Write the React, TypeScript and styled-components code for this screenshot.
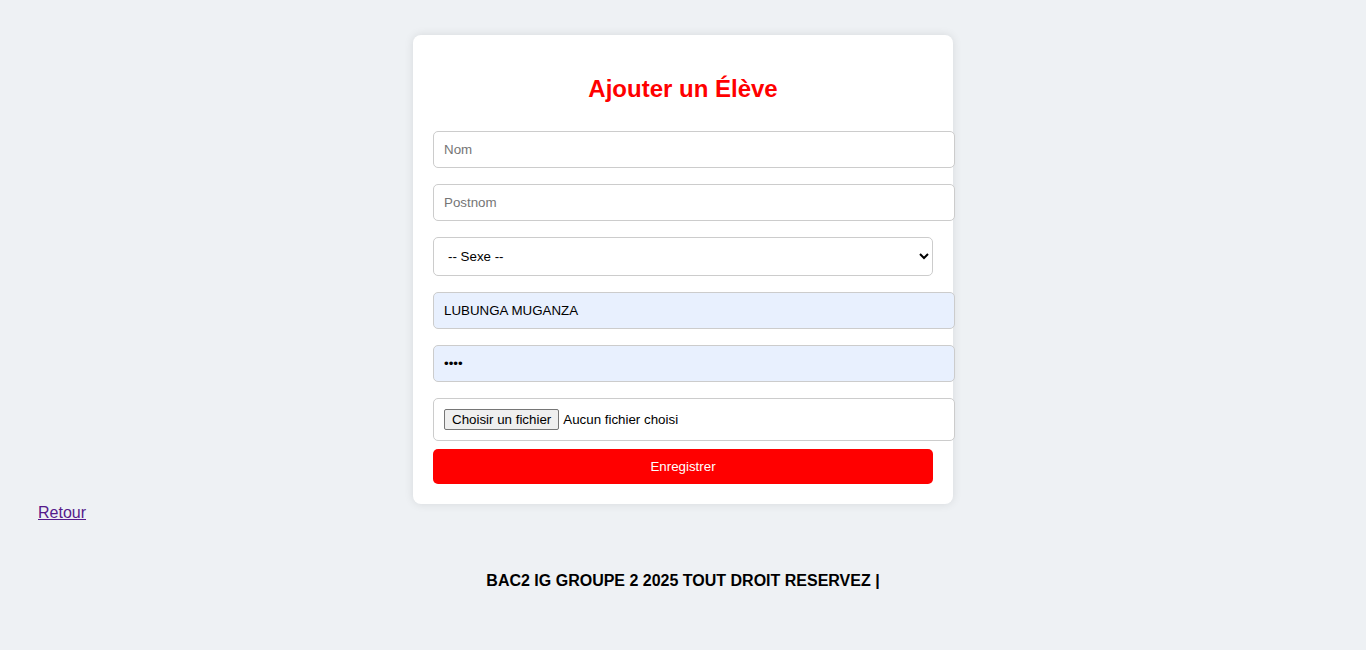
import React from 'react';
import styled, { createGlobalStyle } from 'styled-components';

const GlobalStyle = createGlobalStyle`
  body {
    margin: 0;
    background-color: #eef1f4;
    font-family: "Liberation Sans", Arial, sans-serif;
  }
`;

const Page = styled.div`
  padding-top: 35px;
`;

const Card = styled.div`
  width: 500px;
  margin: 0 auto;
  padding: 20px;
  background-color: #fff;
  border-radius: 8px;
  box-shadow: 0 0 10px rgba(0, 0, 0, 0.1);
`;

const Title = styled.h2`
  margin: 19.92px 0;
  font-size: 24px;
  text-align: center;
  color: #ff0000;
`;

const Form = styled.form`
  display: flex;
  flex-direction: column;
  align-items: flex-start;
`;

const Field = styled.input<{ $filled?: boolean }>`
  width: 100%;
  margin: 8px 0;
  padding: 10px;
  border: 1px solid #ccc;
  border-radius: 5px;
  font-family: inherit;
  font-size: 13.33px;
  color: #000;
  background-color: ${(p) => (p.$filled ? '#e8f0fe' : '#fff')};
  outline: none;

  &::placeholder {
    color: #757575;
  }
`;

const Select = styled.select`
  width: 100%;
  margin: 8px 0;
  padding: 10px;
  border: 1px solid #ccc;
  border-radius: 5px;
  font-family: inherit;
  font-size: 13.33px;
  color: #000;
  background-color: #fff;
`;

const FileBox = styled.label`
  display: flex;
  align-items: center;
  width: 100%;
  margin: 8px 0;
  padding: 10px;
  border: 1px solid #ccc;
  border-radius: 5px;
  background-color: #fff;
  font-size: 13.33px;
  color: #000;

  & input {
    display: none;
  }
`;

const FileButton = styled.span`
  display: inline-block;
  margin-right: 4px;
  padding: 1px 7px;
  height: 17px;
  line-height: 17px;
  border: 1px solid #767676;
  border-radius: 2px;
  background-color: #efefef;
`;

const SubmitButton = styled.button`
  width: 100%;
  margin: 0;
  padding: 10px;
  border: none;
  border-radius: 5px;
  background-color: #ff0000;
  color: #fff;
  font-family: inherit;
  font-size: 13.33px;
  line-height: 15px;
  cursor: pointer;
`;

const BackRow = styled.div`
  padding-left: 38px;
  font-size: 16px;

  & a {
    color: #551a8b;
  }
`;

const Footer = styled.footer`
  margin-top: 50px;
  text-align: center;
  font-weight: bold;
  font-size: 16px;
  color: #000;
`;

function App() {
  return (
    <Page>
      <GlobalStyle />
      <Card>
        <Title>Ajouter un Élève</Title>
        <Form onSubmit={(e) => e.preventDefault()}>
          <Field type="text" placeholder="Nom" />
          <Field type="text" placeholder="Postnom" />
          <Select defaultValue="">
            <option value="">-- Sexe --</option>
            <option value="M">Masculin</option>
            <option value="F">Féminin</option>
          </Select>
          <Field $filled type="text" defaultValue="LUBUNGA MUGANZA" />
          <Field $filled type="password" defaultValue="1234" />
          <FileBox>
            <input type="file" />
            <FileButton>Choisir un fichier</FileButton>
            <span>Aucun fichier choisi</span>
          </FileBox>
          <SubmitButton type="submit">Enregistrer</SubmitButton>
        </Form>
      </Card>
      <BackRow>
        <a href="#">Retour</a>
      </BackRow>
      <Footer>BAC2 IG GROUPE 2 2025 TOUT DROIT RESERVEZ |</Footer>
    </Page>
  );
}

export default App;
